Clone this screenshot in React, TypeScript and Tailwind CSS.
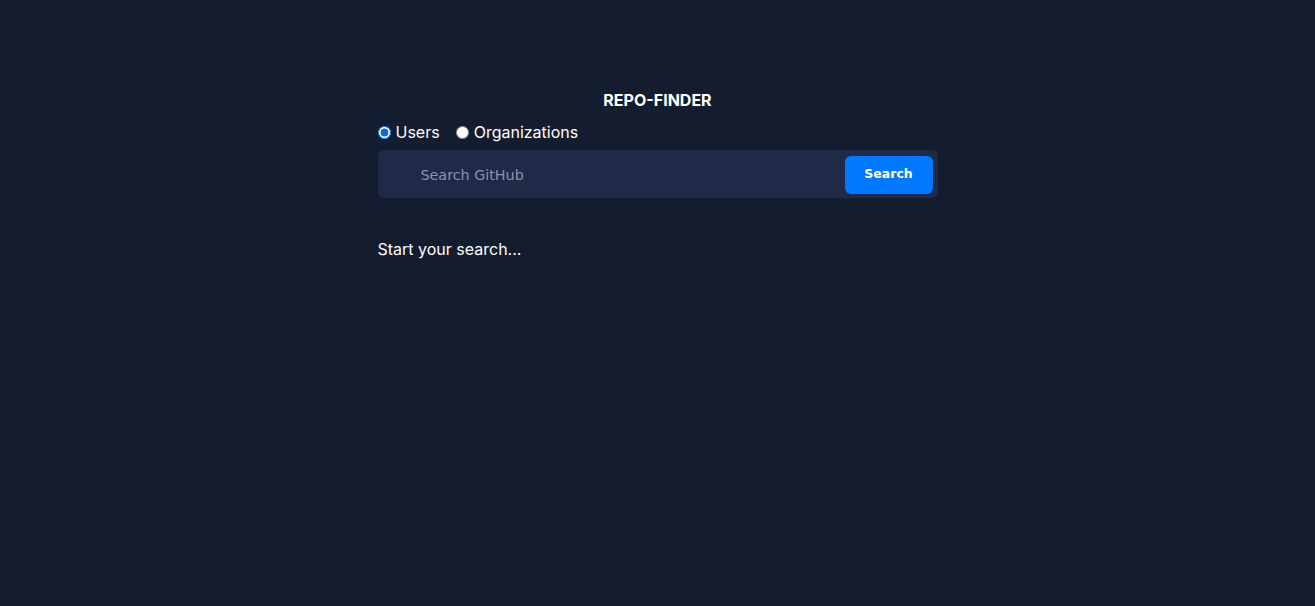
import { useState } from "react";

export default function App() {
  const [type, setType] = useState("users");
  const [query, setQuery] = useState("");

  return (
    <div
      className="min-h-[606px] w-full bg-[#141c2f] text-white"
      style={{ fontFamily: "Inter, sans-serif" }}
    >
      <div className="mx-auto w-[560px] pt-[89px]">
        <h1 className="text-center text-[16px] font-bold leading-[22px]">REPO-FINDER</h1>
        <div className="mt-[11px] flex items-center gap-[16px] text-[16px] leading-[20px]">
          <label className="flex items-center gap-[5px]">
            <input
              type="radio"
              name="type"
              checked={type === "users"}
              onChange={() => setType("users")}
              className="m-0 h-[13px] w-[13px] accent-[#0b6bde]"
            />
            Users
          </label>
          <label className="flex items-center gap-[5px]">
            <input
              type="radio"
              name="type"
              checked={type === "orgs"}
              onChange={() => setType("orgs")}
              className="m-0 h-[13px] w-[13px]"
            />
            Organizations
          </label>
        </div>
        <div className="mt-[8px] flex h-[48px] items-center rounded-[6px] bg-[#1f2a48] pl-[43px] pr-[5px]">
          <input
            value={query}
            onChange={(e) => setQuery(e.target.value)}
            placeholder="Search GitHub"
            className="mt-[3px] flex-1 bg-transparent text-[14.3px] text-white outline-none placeholder:text-[#8c93a6]"
            style={{ fontFamily: "'DejaVu Sans', sans-serif" }}
          />
          <button
            className="mt-[1px] h-[38px] w-[88px] rounded-[6px] bg-[#0079ff] text-[12.5px] font-bold text-white"
            style={{ fontFamily: "'DejaVu Sans', sans-serif" }}
          >
            Search
          </button>
        </div>
        <p className="mt-[40px] text-[16px] leading-[22px]">Start your search...</p>
      </div>
    </div>
  );
}
